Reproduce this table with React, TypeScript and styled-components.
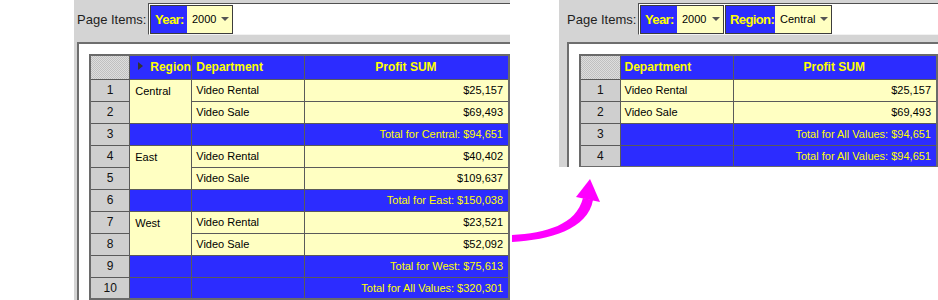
import React from "react";
import styled, { createGlobalStyle } from "styled-components";

const GlobalStyle = createGlobalStyle`
  body {
    margin: 0;
    background: #fff;
    font-family: "Liberation Sans", Arial, sans-serif;
  }
`;

const BLUE = "#2c2cff";
const CREAM = "#ffffc2";
const GOLD = "#ffff00";
const GRID = "#5a5a5a";

const Page = styled.div`
  position: relative;
  width: 938px;
  height: 300px;
  overflow: hidden;
  box-sizing: border-box;
  display: flex;
  align-items: flex-start;
  gap: 49px;
  padding-left: 74px;
`;

const Panel = styled.div<{ $w: number; $h: number; $inset: number }>`
  flex-shrink: 0;
  width: ${(p) => p.$w}px;
  height: ${(p) => p.$h}px;
  box-sizing: border-box;
  padding-left: ${(p) => p.$inset}px;
  background: #d4d4d4;
  overflow: hidden;
  display: flex;
  flex-direction: column;
`;

const TopBar = styled.div`
  display: flex;
  align-items: center;
  height: 32px;
  margin-top: 3px;
  flex-shrink: 0;
`;

const BarLabel = styled.span`
  width: 71px;
  flex-shrink: 0;
  font-size: 13px;
  color: #1e1e1e;
`;

const ItemField = styled.div`
  flex: 1;
  height: 32px;
  box-sizing: border-box;
  display: flex;
  align-items: center;
  gap: 1px;
  padding-left: 1px;
  background: #fff;
  border-top: 1px solid #505050;
  border-left: 1px solid #505050;
  border-bottom: 1px solid #f2f2f2;
`;

const Item = styled.div`
  display: flex;
  height: 29px;
  box-sizing: border-box;
  border: 1px solid #3c3c3c;
`;

const ItemLabel = styled.span<{ $w: number }>`
  width: ${(p) => p.$w}px;
  box-sizing: border-box;
  display: flex;
  align-items: center;
  padding-left: 4px;
  background: ${BLUE};
  color: ${GOLD};
  font-size: 13px;
  font-weight: bold;
  letter-spacing: -0.6px;
`;

const ItemValue = styled.span<{ $w: number }>`
  width: ${(p) => p.$w}px;
  box-sizing: border-box;
  display: flex;
  align-items: center;
  padding: 0 3px 0 5px;
  background: ${CREAM};
  color: #000;
  font-size: 11px;
`;

const Caret = styled.span`
  margin-left: auto;
  width: 0;
  height: 0;
  border-left: 4px solid transparent;
  border-right: 4px solid transparent;
  border-top: 4px solid #555;
`;

const Sheet = styled.div`
  flex: 1;
  margin-top: 7px;
  background: #fff;
  border-top: 2px solid #6e6e6e;
  border-left: 2px solid #6e6e6e;
  padding: 10px 0 0 10px;
`;

const Grid = styled.table`
  border-collapse: collapse;
  table-layout: fixed;
  border: 2px solid #6a6a6a;
  font-family: "Liberation Sans", Arial, sans-serif;
`;

type CellKind = "corner" | "num" | "head" | "data" | "total";

const Cell = styled.td<{ $kind: CellKind; $align?: "left" | "center" | "right"; $h?: number }>`
  height: ${(p) => p.$h ?? 22}px;
  padding: 0 5px 0 4px;
  border: 1px solid ${GRID};
  box-sizing: border-box;
  white-space: nowrap;
  overflow: hidden;
  text-align: ${(p) => p.$align ?? "left"};
  vertical-align: middle;
  font-size: 11px;
  color: #000;
  background: ${CREAM};

  ${(p) =>
    (p.$kind === "corner" || p.$kind === "num") &&
    `
    background: repeating-conic-gradient(#c0c0c0 0% 25%, #dedede 0% 50%) 0 0 / 2px 2px;
    text-align: center;
    font-size: 12px;
    color: #111;
    padding: 0;
  `}
  ${(p) =>
    p.$kind === "head" &&
    `
    background: ${BLUE};
    color: ${GOLD};
    font-size: 12px;
    font-weight: bold;
  `}
  ${(p) =>
    p.$kind === "total" &&
    `
    background: ${BLUE};
    color: ${GOLD};
  `}
`;

const GroupCell = styled(Cell)`
  vertical-align: top;
  padding-top: 5px;
  padding-left: 5px;
`;

const Pivot = styled.span`
  display: inline-block;
  width: 0;
  height: 0;
  margin: 0 7px 0 8px;
  vertical-align: 1px;
  border-top: 4px solid transparent;
  border-bottom: 4px solid transparent;
  border-left: 5px solid #333;
`;

const Arrow = styled.svg`
  position: absolute;
  left: 0;
  top: 0;
  pointer-events: none;
`;

type PageItem = { label: string; value: string; lw: number; vw: number };

const PageItems: React.FC<{ items: PageItem[] }> = ({ items }) => (
  <TopBar>
    <BarLabel>Page Items:</BarLabel>
    <ItemField>
      {items.map((it) => (
        <Item key={it.label}>
          <ItemLabel $w={it.lw}>{it.label}</ItemLabel>
          <ItemValue $w={it.vw}>
            {it.value}
            <Caret />
          </ItemValue>
        </Item>
      ))}
    </ItemField>
  </TopBar>
);

type Group = {
  region: string;
  rows: [string, string][];
  total: string;
};

const groups: Group[] = [
  {
    region: "Central",
    rows: [
      ["Video Rental", "$25,157"],
      ["Video Sale", "$69,493"],
    ],
    total: "Total for Central: $94,651",
  },
  {
    region: "East",
    rows: [
      ["Video Rental", "$40,402"],
      ["Video Sale", "$109,637"],
    ],
    total: "Total for East: $150,038",
  },
  {
    region: "West",
    rows: [
      ["Video Rental", "$23,521"],
      ["Video Sale", "$52,092"],
    ],
    total: "Total for West: $75,613",
  },
];

const RegionTable: React.FC = () => {
  let n = 0;
  return (
    <Grid>
      <colgroup>
        <col style={{ width: 40 }} />
        <col style={{ width: 62 }} />
        <col style={{ width: 113 }} />
        <col style={{ width: 205 }} />
      </colgroup>
      <tbody>
        <tr>
          <Cell $kind="corner" $h={24} />
          <Cell $kind="head" $h={24} style={{ padding: 0 }}>
            <Pivot />
            Region
          </Cell>
          <Cell $kind="head" $h={24}>Department</Cell>
          <Cell $kind="head" $h={24} $align="center">Profit SUM</Cell>
        </tr>
        {groups.map((g) => (
          <React.Fragment key={g.region}>
            {g.rows.map(([dept, value], i) => {
              n += 1;
              return (
                <tr key={dept}>
                  <Cell $kind="num">{n}</Cell>
                  {i === 0 && (
                    <GroupCell $kind="data" rowSpan={g.rows.length}>
                      {g.region}
                    </GroupCell>
                  )}
                  <Cell $kind="data">{dept}</Cell>
                  <Cell $kind="data" $align="right">{value}</Cell>
                </tr>
              );
            })}
            <tr>
              <Cell $kind="num">{++n}</Cell>
              <Cell $kind="total" />
              <Cell $kind="total" />
              <Cell $kind="total" $align="right">{g.total}</Cell>
            </tr>
          </React.Fragment>
        ))}
        <tr>
          <Cell $kind="num">{++n}</Cell>
          <Cell $kind="total" />
          <Cell $kind="total" />
          <Cell $kind="total" $align="right">Total for All Values: $320,301</Cell>
        </tr>
      </tbody>
    </Grid>
  );
};

const centralRows: [string, string][] = [
  ["Video Rental", "$25,157"],
  ["Video Sale", "$69,493"],
];

const FilteredTable: React.FC = () => (
  <Grid>
    <colgroup>
      <col style={{ width: 40 }} />
      <col style={{ width: 113 }} />
      <col style={{ width: 204 }} />
    </colgroup>
    <tbody>
      <tr>
        <Cell $kind="corner" $h={24} />
        <Cell $kind="head" $h={24}>Department</Cell>
        <Cell $kind="head" $h={24} $align="center">Profit SUM</Cell>
      </tr>
      {centralRows.map(([dept, value], i) => (
        <tr key={dept}>
          <Cell $kind="num">{i + 1}</Cell>
          <Cell $kind="data">{dept}</Cell>
          <Cell $kind="data" $align="right">{value}</Cell>
        </tr>
      ))}
      {[3, 4].map((k) => (
        <tr key={k}>
          <Cell $kind="num">{k}</Cell>
          <Cell $kind="total" />
          <Cell $kind="total" $align="right">Total for All Values: $94,651</Cell>
        </tr>
      ))}
    </tbody>
  </Grid>
);

export default function App() {
  return (
    <>
      <GlobalStyle />
      <Page>
        <Panel $w={436} $h={300} $inset={3}>
          <PageItems items={[{ label: "Year:", value: "2000", lw: 36, vw: 45 }]} />
          <Sheet>
            <RegionTable />
          </Sheet>
        </Panel>
        <Panel $w={379} $h={167} $inset={8}>
          <PageItems
            items={[
              { label: "Year:", value: "2000", lw: 36, vw: 46 },
              { label: "Region:", value: "Central", lw: 49, vw: 56 },
            ]}
          />
          <Sheet>
            <FilteredTable />
          </Sheet>
        </Panel>
        <Arrow width="938" height="300" viewBox="0 0 938 300">
          <path
            d="M512,235 C546,233 576,225 583,198 L593,200 C588,229 550,240 512,242 Z"
            fill="#ff00ff"
          />
          <polygon points="590,179 576,197 600,202" fill="#ff00ff" />
        </Arrow>
      </Page>
    </>
  );
}
